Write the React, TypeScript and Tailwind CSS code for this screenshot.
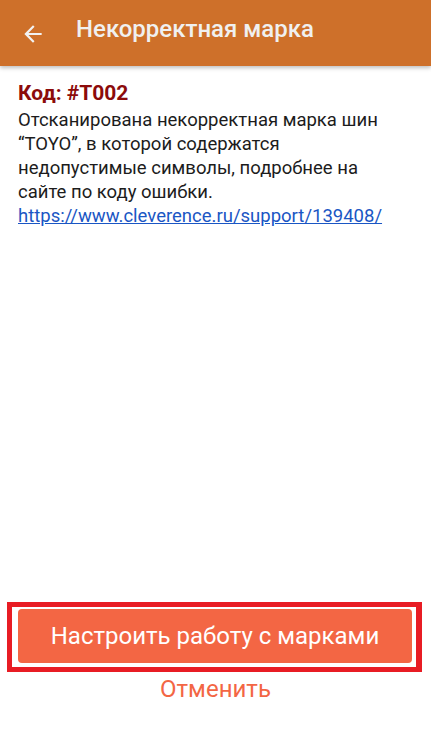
export default function App() {
    return (
        <div className="flex h-[738px] w-[431px] flex-col bg-white font-['Roboto',sans-serif]">
            <header className="relative z-10 flex h-[66px] shrink-0 items-center bg-[#ce702a] shadow-[0_2px_4px_rgba(0,0,0,0.25)]">
                <svg viewBox="0 0 24 24" className="ml-[20px] mt-[2px] h-[26px] w-[26px] fill-[#f2f2f2]">
                    <path d="M20 11H7.83l5.59-5.59L12 4l-8 8 8 8 1.41-1.41L7.83 13H20v-2z" />
                </svg>
                <h1 className="mb-[8px] ml-[30px] text-[24px] font-medium text-[#f0f0f0]">Некорректная марка</h1>
            </header>

            <main className="flex-1 pl-[18px] pr-[28px] pt-[12px]">
                <div className="text-[21px] font-bold leading-[30px] text-[#8c0b0b]">Код: #T002</div>
                <p className="text-[18.5px] leading-[24px] text-[#1c1c1c]">
                    Отсканирована некорректная марка шин “TOYO”, в которой содержатся недопустимые символы,
                    подробнее на сайте по коду ошибки.
                    <br />
                    <a href="#" className="text-[#1a56c4] underline">
                        https://www.cleverence.ru/support/139408/
                    </a>
                </p>
            </main>

            <footer className="flex shrink-0 flex-col pb-[35px]">
                <div className="ml-[7px] w-[415px] border-[5px] border-r-[6px] border-[#e81c24] pb-[4px] pl-[6px] pr-[4px] pt-[2px]">
                    <button className="h-[54px] w-[394px] rounded-[4px] bg-[#f36644] text-[24px] text-white">
                        Настроить работу с марками
                    </button>
                </div>
                <button className="mt-[3px] self-center text-[24px] leading-[28px] text-[#f36644]">Отменить</button>
            </footer>
        </div>
    )
}
